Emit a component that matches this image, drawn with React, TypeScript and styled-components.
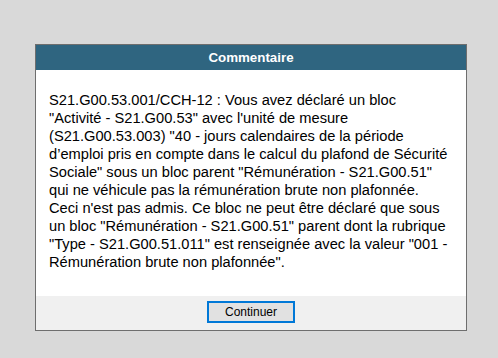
import styled, { createGlobalStyle } from "styled-components"

const GlobalStyle = createGlobalStyle`
  html, body {
    margin: 0;
    padding: 0;
    background: #d9d9d9;
  }
  body {
    font-family: "Liberation Sans", Arial, sans-serif;
  }
`

const Page = styled.div`
  width: 498px;
  height: 358px;
  padding-top: 44px;
  padding-left: 35px;
  box-sizing: border-box;
`

const Dialog = styled.div`
  width: 432px;
  border: 1px solid #6e6e6e;
  box-sizing: border-box;
  background: #ffffff;
  display: flex;
  flex-direction: column;
`

const Header = styled.div`
  height: 25px;
  background: #2f6580;
  color: #ffffff;
  font-weight: bold;
  font-size: 13.33px;
  display: flex;
  align-items: center;
  justify-content: center;
`

const Body = styled.div`
  height: 226px;
  padding: 21px 14px 0 13px;
  box-sizing: border-box;
  font-size: 14.67px;
  line-height: 18px;
  color: #000000;
`

const Footer = styled.div`
  height: 34px;
  background: #f0f0f0;
  display: flex;
  justify-content: center;
  padding-top: 5px;
  box-sizing: border-box;
`

const Button = styled.button`
  width: 88px;
  height: 22px;
  border: 2px solid #0078d7;
  background: #e1e1e1;
  font-family: "Liberation Sans", Arial, sans-serif;
  font-size: 12px;
  color: #000000;
  padding: 0;
  cursor: pointer;
`

const App = () => {
  return (
    <>
      <GlobalStyle />
      <Page>
        <Dialog>
          <Header>Commentaire</Header>
          <Body>
            S21.G00.53.001/CCH-12 : Vous avez déclaré un bloc "Activité -
            S21.G00.53" avec l'unité de mesure (S21.G00.53.003) "40 - jours
            calendaires de la période d’emploi pris en compte dans le calcul du
            plafond de Sécurité Sociale" sous un bloc parent "Rémunération -
            S21.G00.51" qui ne véhicule pas la rémunération brute non
            plafonnée.
            <br />
            Ceci n'est pas admis. Ce bloc ne peut être déclaré que sous un bloc
            "Rémunération - S21.G00.51" parent dont la rubrique "Type -
            S21.G00.51.011" est renseignée avec la valeur "001 - Rémunération
            brute non plafonnée".
          </Body>
          <Footer>
            <Button>Continuer</Button>
          </Footer>
        </Dialog>
      </Page>
    </>
  )
}

export default App
